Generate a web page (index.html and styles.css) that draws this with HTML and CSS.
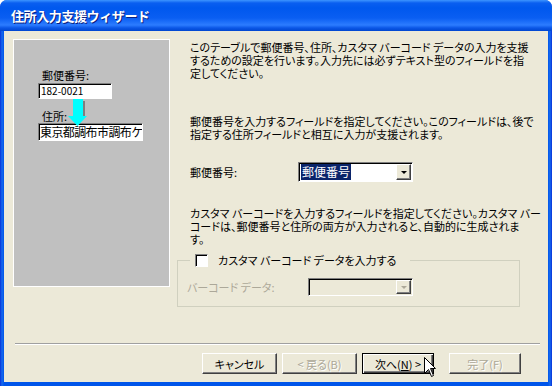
FILE: index.html
```html
<html>
<head>
    <link rel="stylesheet" href="styles.css">
</head>
<body>
    <div class="window">
        <div class="titlebar">
            <span class="title">住所入力支援ウィザード</span>
        </div>
        <div class="client">
            <div class="main">
                <div class="panel">
                    <div class="sample-label">郵便番号:</div>
                    <div class="sample-input zip">182-0021</div>
                    <div class="sample-label addr-label">住所:</div>
                    <div class="sample-input addr">東京都調布市調布ケ</div>
                    <svg class="arrow" width="20" height="27" viewBox="0 0 20 27">
                        <rect x="15" y="2" width="2" height="16" fill="#7f7f7f"/>
                        <rect x="5" y="0" width="10" height="18" fill="#00ffff"/>
                        <polygon points="0,17 19,17 9.5,27" fill="#00ffff"/>
                    </svg>
                </div>
                <div class="content">
                    <p class="intro">このテーブルで郵便番号、住所、カスタマ バーコード データの入力を支援<br>するための設定を行います。入力先には必ずテキスト型のフィールドを指<br>定してください。</p>
                    <p class="desc">郵便番号を入力するフィールドを指定してください。このフィールドは、後で<br>指定する住所フィールドと相互に入力が支援されます。</p>
                    <div class="field-row">
                        <span class="field-label">郵便番号:</span>
                        <div class="combo">
                            <span class="combo-value">郵便番号</span>
                            <span class="combo-btn"><span class="combo-arrow"></span></span>
                        </div>
                    </div>
                    <p class="desc3">カスタマ バーコードを入力するフィールドを指定してください。カスタマ バー<br>コードは、郵便番号と住所の両方が入力されると、自動的に生成されま<br>す。</p>
                    <fieldset class="group">
                        <legend><span class="checkbox"></span>カスタマ バーコード データを入力する</legend>
                        <div class="field-row disabled">
                            <span class="field-label">バーコード データ:</span>
                            <div class="combo combo-disabled">
                                <span class="combo-value"></span>
                                <span class="combo-btn"><span class="combo-arrow"></span></span>
                            </div>
                        </div>
                    </fieldset>
                </div>
            </div>
            <div class="separator"></div>
            <div class="buttons">
                <button class="btn">キャンセル</button>
                <button class="btn btn-back" disabled>&lt; 戻る(B)</button>
                <button class="btn btn-default">次へ(<u>N</u>) &gt;</button>
                <button class="btn btn-finish" disabled>完了(F)</button>
            </div>
        </div>
        <svg class="cursor" width="13" height="21" viewBox="0 0 13 21">
            <path d="M0.5,0.5 L0.5,16.5 L4.5,12.5 L7.5,19.5 L9.5,18.5 L6.5,11.5 L11.5,11.5 Z" fill="#fff" stroke="#000" stroke-width="1"/>
        </svg>
    </div>
</body>
</html>
```

FILE: styles.css
```css
body {
    margin: 0;
    background-color: #ffffff;
    font-family: "Noto Sans CJK JP", sans-serif;
}
.window {
    position: relative;
    width: 552px;
    height: 386px;
    display: flex;
    flex-direction: column;
    border-radius: 7px 7px 0 0;
    background: linear-gradient(to right, #0831d9 0, #166aee 2px, #0055ea 4px, #0055ea 548px, #166aee 550px, #0831d9 552px);
}
.titlebar {
    height: 31px;
    flex-shrink: 0;
    display: flex;
    align-items: center;
    padding-left: 11px;
    border-radius: 7px 7px 0 0;
    background: linear-gradient(#3d95ff 0, #0a5ff0 3px, #0058ee 8px, #0a5ef2 18px, #2c7cff 25px, #0a56e6 28px, #0046d0 31px);
}
.title {
    color: #ffffff;
    font-size: 13px;
    font-weight: bold;
    letter-spacing: -0.4px;
    text-shadow: 1px 1px 0 #0a1f80;
}
.client {
    flex: 1;
    margin: 0 4px 4px;
    padding-top: 8px;
    background-color: #ece9d8;
}
.main {
    display: flex;
    height: 304px;
    padding-left: 9px;
    box-sizing: border-box;
}

/* left picture panel */
.panel {
    position: relative;
    width: 157px;
    height: 248px;
    flex-shrink: 0;
    box-sizing: border-box;
    padding: 29px 0 0 24px;
    background-color: #c0c0c0;
    border: 1px solid #ffffff;
}
.sample-label {
    margin-left: 4px;
    font-size: 11px;
    line-height: 13px;
    color: #000;
}
.addr-label {
    margin-top: 11px;
}
.sample-input {
    box-sizing: border-box;
    background-color: #ffffff;
    border: 1px solid;
    border-color: #808080 #ffffff #ffffff #808080;
    box-shadow: inset 1px 1px 0 #000;
    color: #000;
    white-space: nowrap;
    overflow: hidden;
}
.zip {
    width: 74px;
    height: 16px;
    margin-top: 1px;
    padding-left: 2px;
    font-size: 10px;
    line-height: 14px;
}
.addr {
    width: 105px;
    height: 18px;
    padding-left: 1px;
    font-size: 12px;
    line-height: 16px;
    letter-spacing: -0.6px;
}
.arrow {
    position: absolute;
    left: 54px;
    top: 59px;
}

/* right side */
.content {
    margin-left: 7px;
    width: 343px;
    font-size: 11px;
    line-height: 13px;
    color: #000;
}
.content p {
    margin: 0;
    padding-left: 13px;
    white-space: nowrap;
    font-feature-settings: "palt";
}
.intro {
    margin-top: 2px !important;
}
.desc {
    margin-top: 35px !important;
}
.desc3 {
    margin-top: 25px !important;
}
.field-row {
    display: flex;
    align-items: center;
    margin-top: 21px;
    height: 20px;
}
.field-label {
    width: 108px;
    padding-left: 13px;
    flex-shrink: 0;
    white-space: nowrap;
}
.combo {
    width: 115px;
    height: 20px;
    box-sizing: border-box;
    display: flex;
    align-items: center;
    justify-content: space-between;
    padding-left: 1px;
    background-color: #ffffff;
    border: 1px solid;
    border-color: #808080 #ffffff #ffffff #808080;
    box-shadow: inset 1px 1px 0 #000;
}
.combo-value {
    margin-left: 1px;
    padding: 0 1px;
    background-color: #0a246a;
    color: #ffffff;
    font-size: 12px;
    line-height: 16px;
}
.combo-btn {
    width: 15px;
    height: 16px;
    margin-right: 1px;
    box-sizing: border-box;
    display: flex;
    align-items: center;
    justify-content: center;
    background-color: #ece9d8;
    border: 1px solid;
    border-color: #ffffff #404040 #404040 #ffffff;
    box-shadow: inset -1px -1px 0 #808080;
}
.combo-arrow {
    width: 0;
    height: 0;
    border-left: 3px solid transparent;
    border-right: 3px solid transparent;
    border-top: 3px solid #000;
}

/* group box */
.group {
    margin: 8px 0 0;
    padding: 0 0 10px;
    width: 343px;
    min-width: 0;
    box-sizing: border-box;
    border: 1px solid #d0d0bf;
}
.group legend {
    display: flex;
    align-items: center;
    margin-left: 12px;
    padding: 0 14px 0 5px;
    height: 13px;
    line-height: 13px;
    font-feature-settings: "palt";
    white-space: nowrap;
}
.checkbox {
    width: 13px;
    height: 13px;
    margin-right: 10px;
    box-sizing: border-box;
    background-color: #ffffff;
    border: 1px solid;
    border-color: #808080 #ffffff #ffffff #808080;
    box-shadow: inset 1px 1px 0 #000;
}
.disabled {
    margin-top: 11px;
    height: 18px;
}
.disabled .field-label {
    width: 121px;
    padding-left: 9px;
    color: #aca899;
    font-feature-settings: "palt";
}
.combo-disabled {
    width: 105px;
    height: 18px;
    background-color: #ece9d8;
}
.combo-disabled .combo-value {
    background: none;
}
.combo-disabled .combo-btn {
    height: 14px;
}
.combo-disabled .combo-arrow {
    border-top-color: #aca899;
}

/* bottom buttons */
.separator {
    height: 1px;
    margin: 0 8px 0 11px;
    background-color: #a0a0a0;
    border-bottom: 1px solid #ffffff;
}
.buttons {
    display: flex;
    margin-top: 8px;
    padding-left: 198px;
}
.btn {
    width: 75px;
    height: 21px;
    margin: 0 5px 0 0;
    padding: 0;
    box-sizing: border-box;
    background-color: #ece9d8;
    border: 1px solid;
    border-color: #ffffff #404040 #404040 #ffffff;
    box-shadow: inset -1px -1px 0 #808080;
    font-family: "Noto Sans CJK JP", sans-serif;
    font-size: 11px;
    color: #000;
    font-feature-settings: "palt";
}
.btn[disabled] {
    color: #aca899;
    text-shadow: 1px 1px 0 #ffffff;
}
.btn-default {
    width: 72px;
    border-color: #000;
    box-shadow: inset 1px 1px 0 #ffffff, inset -1px -1px 0 #404040, inset -2px -2px 0 #808080;
    margin-right: 15px;
}
.btn-finish {
    width: 72px;
}
.cursor {
    position: absolute;
    left: 424px;
    top: 357px;
}
```
